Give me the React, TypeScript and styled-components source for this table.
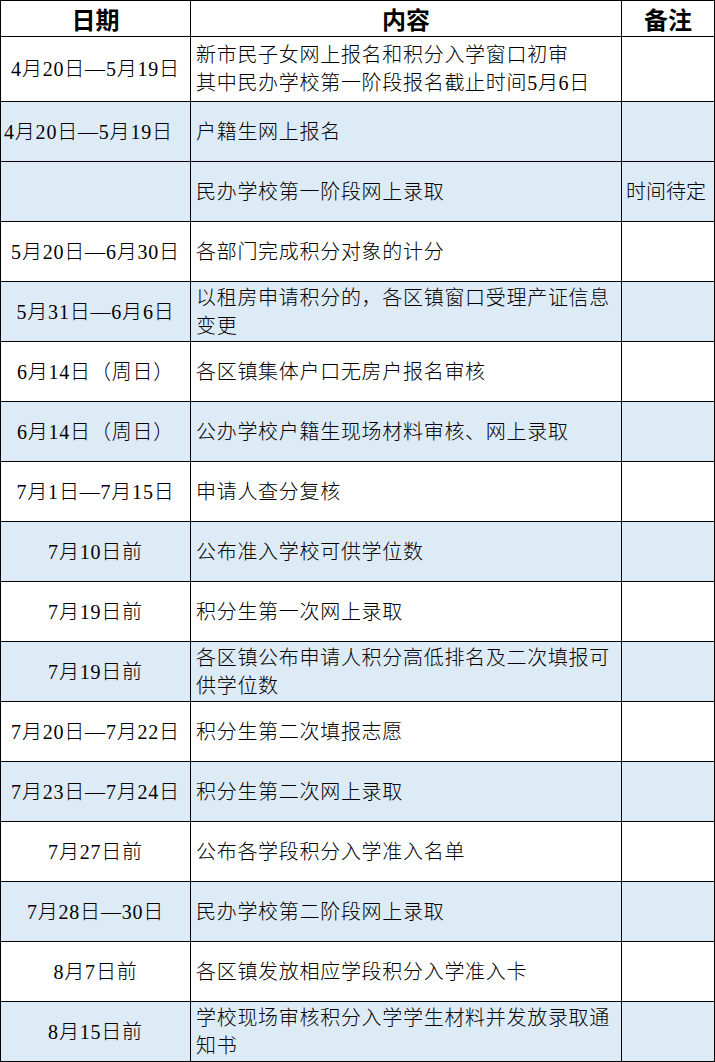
import { createGlobalStyle, styled } from "styled-components";

// 日程表：日期 / 内容 / 备注
type Row = {
  date: string;
  content: string[];
  note?: string;
  shaded?: boolean;
  dateLeft?: boolean;
};

const ROWS: Row[] = [
  {
    date: "4月20日—5月19日",
    content: ["新市民子女网上报名和积分入学窗口初审", "其中民办学校第一阶段报名截止时间5月6日"],
  },
  { date: "4月20日—5月19日", content: ["户籍生网上报名"], shaded: true, dateLeft: true },
  { date: "", content: ["民办学校第一阶段网上录取"], note: "时间待定", shaded: true },
  { date: "5月20日—6月30日", content: ["各部门完成积分对象的计分"] },
  { date: "5月31日—6月6日", content: ["以租房申请积分的，各区镇窗口受理产证信息变更"], shaded: true },
  { date: "6月14日（周日）", content: ["各区镇集体户口无房户报名审核"] },
  { date: "6月14日（周日）", content: ["公办学校户籍生现场材料审核、网上录取"], shaded: true },
  { date: "7月1日—7月15日", content: ["申请人查分复核"] },
  { date: "7月10日前", content: ["公布准入学校可供学位数"], shaded: true },
  { date: "7月19日前", content: ["积分生第一次网上录取"] },
  { date: "7月19日前", content: ["各区镇公布申请人积分高低排名及二次填报可供学位数"], shaded: true },
  { date: "7月20日—7月22日", content: ["积分生第二次填报志愿"] },
  { date: "7月23日—7月24日", content: ["积分生第二次网上录取"], shaded: true },
  { date: "7月27日前", content: ["公布各学段积分入学准入名单"] },
  { date: "7月28日—30日", content: ["民办学校第二阶段网上录取"], shaded: true },
  { date: "8月7日前", content: ["各区镇发放相应学段积分入学准入卡"] },
  { date: "8月15日前", content: ["学校现场审核积分入学学生材料并发放录取通知书"], shaded: true },
];

export default function App() {
  return (
    <>
      <GlobalStyle />
      <Table>
        <HeadCell>日期</HeadCell>
        <HeadCell>内容</HeadCell>
        <HeadCell>备注</HeadCell>
        {ROWS.map((row, i) => (
          <Line key={i}>
            <DateCell $shaded={row.shaded} $left={row.dateLeft}>
              {row.date}
            </DateCell>
            <ContentCell $shaded={row.shaded}>
              <ContentText>
                {row.content.map((t, j) => (
                  <span key={j}>
                    {j > 0 && <br />}
                    {t}
                  </span>
                ))}
              </ContentText>
            </ContentCell>
            <NoteCell $shaded={row.shaded}>{row.note}</NoteCell>
          </Line>
        ))}
      </Table>
    </>
  );
}

const GlobalStyle = createGlobalStyle`
  body {
    margin: 0;
    background: #ffffff;
    font-family: "Liberation Serif", "Noto Sans CJK SC", serif;
    color: #000000;
  }
`;

const Table = styled.div`
  width: 715px;
  display: grid;
  grid-template-columns: 189px 430px 92px;
  grid-template-rows: 35px 64px;
  grid-auto-rows: 59px;
  gap: 1px;
  padding: 1px;
  box-sizing: border-box;
  background: #000000;
`;

const Line = styled.div`
  display: contents;
`;

const HeadCell = styled.div`
  background: #ffffff;
  display: flex;
  align-items: center;
  justify-content: center;
  font-family: "Noto Sans CJK SC", sans-serif;
  font-weight: 700;
  font-size: 24px;
  line-height: 1;
`;

const Cell = styled.div<{ $shaded?: boolean }>`
  background: ${(p) => (p.$shaded ? "#ddebf7" : "#ffffff")};
  display: flex;
  align-items: center;
  font-size: 20px;
  font-weight: 300;
  line-height: 28px;
  white-space: nowrap;
`;

const DateCell = styled(Cell)<{ $left?: boolean }>`
  justify-content: ${(p) => (p.$left ? "flex-start" : "center")};
  padding-left: ${(p) => (p.$left ? "3px" : "0")};
  letter-spacing: 0.8px;
`;

const ContentCell = styled(Cell)`
  padding-left: 5px;
  white-space: normal;
`;

const ContentText = styled.div`
  letter-spacing: 0.7px;
  width: 420px;
`;

const NoteCell = styled(Cell)`
  padding-left: 4px;
  letter-spacing: 0;
`;
